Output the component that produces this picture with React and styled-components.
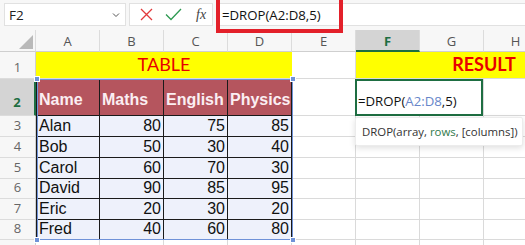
import React from "react";
import styled, { createGlobalStyle } from "styled-components";

const Global = createGlobalStyle`
  html, body { margin: 0; padding: 0; background: #fff; overflow: hidden; }
  body { width: 525px; height: 245px; }
  * { box-sizing: border-box; }
`;

const UI = `"Open Sans", "Noto Sans", sans-serif`;
const CELL = `"Liberation Sans", Arial, sans-serif`;
const TITLE = `Lato, "Open Sans", sans-serif`;

const Page = styled.div`
  width: 525px;
  height: 245px;
  overflow: hidden;
  display: flex;
  flex-direction: column;
  background: #fff;
`;

const Toolbar = styled.div`
  position: relative;
  height: 30px;
  flex: none;
  display: flex;
  align-items: flex-start;
  gap: 3px;
  padding: 3px 0 0 4px;
  background: #f7f7f7;
`;

const NameBox = styled.div`
  width: 122px;
  height: 23px;
  background: #fff;
  border: 1px solid #e1e1e1;
  display: flex;
  align-items: center;
  justify-content: space-between;
  padding: 0 5px 0 4px;
  font-family: ${UI};
  font-size: 13.5px;
  color: #222;
`;

const FxBox = styled.div`
  width: 84px;
  height: 23px;
  background: #fff;
  border: 1px solid #e1e1e1;
  display: flex;
  align-items: center;
  gap: 12px;
  padding-left: 10px;
`;

const FxLabel = styled.span`
  font-family: "Liberation Serif", serif;
  font-style: italic;
  font-size: 14px;
  color: #444;
  margin-left: 2px;
`;

const FormulaInput = styled.div`
  flex: 1;
  height: 23px;
  background: #fff;
  border: 1px solid #e1e1e1;
  border-right: none;
  display: flex;
  align-items: center;
  padding-left: 5px;
  font-family: ${UI};
  font-size: 13.2px;
  color: #111;
`;

const Highlight = styled.div`
  position: absolute;
  left: 216px;
  top: -4px;
  width: 127px;
  height: 37px;
  border: 4px solid #e3202a;
  pointer-events: none;
`;

const Sheet = styled.div`
  display: grid;
  grid-template-columns: 36px repeat(9, 64px);
  grid-template-rows: 22px 27px 37px 21px 21px 21px 20px 21px 20px 20px;
  font-family: ${CELL};
`;

const at = (p) => `
  grid-row: ${p.$r};
  grid-column: ${p.$c};
`;

const Corner = styled.div`
  ${at}
  background: #f7f7f7;
  border-right: 1px solid #dcdcdc;
  border-bottom: 1px solid #cfcfcf;
  display: flex;
  align-items: flex-end;
  justify-content: flex-end;
  padding: 0 2px 2px 0;
`;

const ColHead = styled.div`
  ${at}
  background: ${(p) => (p.$selected ? "#d4d4d4" : "#f7f7f7")};
  border-right: 1px solid #dcdcdc;
  border-bottom: ${(p) => (p.$selected ? "2px solid #1e6e42" : "1px solid #cfcfcf")};
  display: flex;
  align-items: center;
  justify-content: center;
  font-family: ${UI};
  font-size: 13px;
  font-weight: ${(p) => (p.$selected ? 700 : 400)};
  color: ${(p) => (p.$selected ? "#1e6e42" : "#555")};
  padding-top: 1px;
`;

const RowHead = styled.div`
  ${at}
  background: ${(p) => (p.$selected ? "#d4d4d4" : "#f7f7f7")};
  border-right: ${(p) => (p.$selected ? "2px solid #1e6e42" : "1px solid #cfcfcf")};
  border-bottom: 1px solid #dcdcdc;
  display: flex;
  align-items: flex-end;
  justify-content: center;
  padding-bottom: ${(p) => (p.$selected ? "4px" : "2px")};
  font-family: ${UI};
  font-size: 13px;
  font-weight: ${(p) => (p.$selected ? 700 : 400)};
  color: ${(p) => (p.$selected ? "#1e6e42" : "#666")};
`;

const Cell = styled.div`
  ${at}
  border-right: 1px solid #dadada;
  border-bottom: 1px solid #dadada;
  background: #fff;
`;

const Banner = styled.div`
  ${at}
  background: #ffff00;
  border-bottom: 1px solid #dadada;
  display: flex;
  align-items: flex-end;
  justify-content: center;
  padding-bottom: 3px;
  font-family: ${TITLE};
  font-size: 18px;
  font-weight: ${(p) => (p.$bold ? 700 : 400)};
  color: #e80000;
`;

const HeadCell = styled.div`
  ${at}
  background: #b5555e;
  border-right: 1px solid #1a1a1a;
  border-bottom: 1px solid #1a1a1a;
  border-left: ${(p) => (p.$first ? "1px solid #1a1a1a" : "none")};
  display: flex;
  align-items: flex-end;
  padding: 0 2px 6px;
  font-size: 16px;
  font-weight: 700;
  color: #fbeef2;
  white-space: nowrap;
  overflow: hidden;
`;

const DataCell = styled.div`
  ${at}
  background: #eef1fb;
  border-right: 1px solid #1a1a1a;
  border-bottom: 1px solid #1a1a1a;
  border-left: ${(p) => (p.$first ? "1px solid #1a1a1a" : "none")};
  display: flex;
  align-items: flex-end;
  justify-content: ${(p) => (p.$num ? "flex-end" : "flex-start")};
  padding: 0 2px 1px 2px;
  font-size: 16px;
  line-height: 18px;
  color: #111;
`;

const RangeBox = styled.div`
  grid-column: 2 / 6;
  grid-row: 3 / 10;
  position: relative;
  border: 1.5px solid #6f92d8;
  margin: 0 -1px 0 1px;
  pointer-events: none;
  z-index: 2;
`;

const Handle = styled.span`
  position: absolute;
  width: 6px;
  height: 6px;
  background: #6f92d8;
  border: 1px solid #fff;
  ${(p) => (p.$top ? "top: -4px;" : "bottom: -4px;")}
  ${(p) => (p.$left ? "left: -4px;" : "right: -4px;")}
`;

const EditBox = styled.div`
  grid-column: 7 / 9;
  grid-row: 3;
  z-index: 3;
  background: #fff;
  border: 2px solid #1e6e42;
  margin: 0 1px 0 -1px;
  display: flex;
  align-items: flex-end;
  padding: 0 0 4px 1px;
  font-family: ${UI};
  font-size: 13.2px;
  color: #111;
  white-space: pre;
`;

const Ref = styled.span`
  color: ${(p) => p.$color};
`;

const Tooltip = styled.div`
  grid-column: 7 / 11;
  grid-row: 4 / 6;
  z-index: 4;
  align-self: start;
  justify-self: start;
  width: 168px;
  height: 29px;
  margin: 1px 0 0 -1px;
  background: #fff;
  border: 1px solid #ececec;
  box-shadow: 0 2px 6px rgba(0, 0, 0, 0.13);
  border-radius: 2px;
  display: flex;
  align-items: center;
  padding-left: 6px;
  font-family: ${UI};
  font-size: 11.4px;
  color: #333;
  white-space: pre;
`;

const cols = ["A", "B", "C", "D", "E", "F", "G", "H", "I"];
const data = [
  ["Alan", 80, 75, 85],
  ["Bob", 50, 30, 40],
  ["Carol", 60, 70, 30],
  ["David", 90, 85, 95],
  ["Eric", 20, 30, 20],
  ["Fred", 40, 60, 80],
];
const heads = ["Name", "Maths", "English", "Physics"];

const Chevron = () => (
  <svg width="8" height="6" viewBox="0 0 8 6">
    <path d="M1 1.5 L4 4.5 L7 1.5" fill="none" stroke="#555" strokeWidth="1" />
  </svg>
);

const Cross = () => (
  <svg width="13" height="13" viewBox="0 0 13 13">
    <path d="M1 1 L12 12 M12 1 L1 12" stroke="#e2393b" strokeWidth="1.3" fill="none" />
  </svg>
);

const Check = () => (
  <svg width="17" height="13" viewBox="0 0 17 13">
    <path d="M1 6.5 L6 11.5 L16 1" stroke="#2e9a52" strokeWidth="1.3" fill="none" />
  </svg>
);

const CornerTri = () => (
  <svg width="14" height="14" viewBox="0 0 14 14">
    <path d="M14 0 L14 14 L0 14 Z" fill="#b9b9b9" />
  </svg>
);

// plain cells from sheet grid column `from` (A = 2) through I
const Plain = ({ r, from }) =>
  Array.from({ length: 11 - from }).map((_, i) => (
    <Cell key={i} $r={r} $c={from + i} />
  ));

export default function App() {
  return (
    <Page>
      <Global />
      <Toolbar>
        <NameBox>
          <span>F2</span>
          <Chevron />
        </NameBox>
        <FxBox>
          <Cross />
          <Check />
          <FxLabel>fx</FxLabel>
        </FxBox>
        <FormulaInput>=DROP(A2:D8,5)</FormulaInput>
        <Highlight />
      </Toolbar>
      <Sheet>
        <Corner $r={1} $c={1}>
          <CornerTri />
        </Corner>
        {cols.map((c, i) => (
          <ColHead key={c} $r={1} $c={i + 2} $selected={c === "F"}>
            {c}
          </ColHead>
        ))}

        <RowHead $r={2} $c={1}>1</RowHead>
        <Banner $r={2} $c="2 / 6">TABLE</Banner>
        <Cell $r={2} $c={6} />
        <Banner $r={2} $c="7 / 11" $bold>
          RESULT
        </Banner>

        <RowHead $r={3} $c={1} $selected>2</RowHead>
        {heads.map((h, i) => (
          <HeadCell key={h} $r={3} $c={i + 2} $first={i === 0}>
            {h}
          </HeadCell>
        ))}
        <Plain r={3} from={6} />

        {data.map((row, ri) => (
          <React.Fragment key={ri}>
            <RowHead $r={ri + 4} $c={1}>{ri + 3}</RowHead>
            {row.map((v, i) => (
              <DataCell key={i} $r={ri + 4} $c={i + 2} $first={i === 0} $num={i > 0}>
                {v}
              </DataCell>
            ))}
            <Plain r={ri + 4} from={6} />
          </React.Fragment>
        ))}

        <RowHead $r={10} $c={1} />
        <Plain r={10} from={2} />

        <RangeBox>
          <Handle $top $left />
          <Handle $top />
          <Handle $left />
          <Handle />
        </RangeBox>
        <EditBox>
          =DROP(<Ref $color="#6786c9">A2:D8</Ref>,5)
        </EditBox>
        <Tooltip>
          DROP(array, <Ref $color="#2f7a4c">rows</Ref>, [columns])
        </Tooltip>
      </Sheet>
    </Page>
  );
}
